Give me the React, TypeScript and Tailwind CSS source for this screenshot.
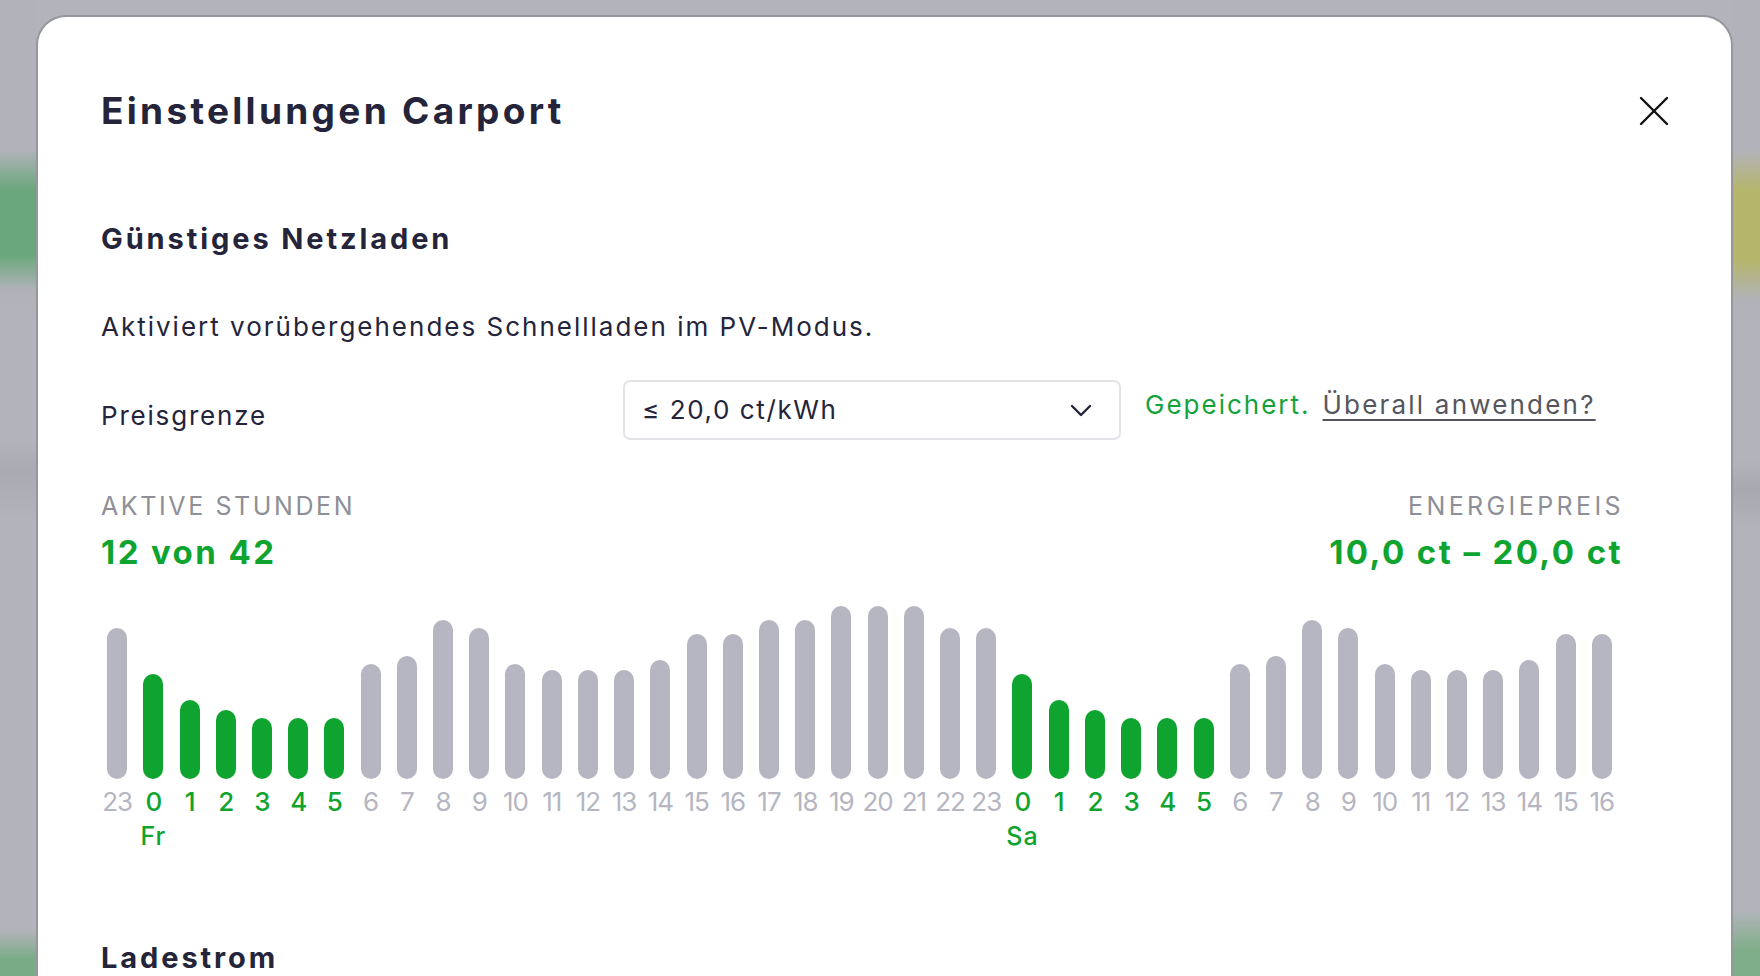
import React from 'react';

// hour, relative bar height (px), cheap hour?
const hours: { h: number; v: number; day?: string }[] = [
  { h: 23, v: 151 },
  ...[105, 79, 69, 61, 61, 61, 115, 123, 159, 151, 115, 109, 109, 109, 119, 145, 145, 159, 159, 173, 173, 173, 151, 151].map(
    (v, h) => ({ h, v, day: h === 0 ? 'Fr' : undefined })
  ),
  ...[105, 79, 69, 61, 61, 61, 115, 123, 159, 151, 115, 109, 109, 109, 119, 145, 145].map((v, h) => ({
    h,
    v,
    day: h === 0 ? 'Sa' : undefined,
  })),
];

const isActive = (h: number) => h >= 0 && h <= 5;

const CloseIcon = () => (
  <svg width="30" height="30" viewBox="0 0 30 30" fill="none" stroke="#111" strokeWidth="2.4" strokeLinecap="round">
    <line x1="2" y1="2" x2="28" y2="28" />
    <line x1="28" y1="2" x2="2" y2="28" />
  </svg>
);

const Chevron = () => (
  <svg width="22" height="13" viewBox="0 0 22 13" fill="none" stroke="#24243a" strokeWidth="2.4" strokeLinecap="round" strokeLinejoin="round">
    <polyline points="2,2 11,11 20,2" />
  </svg>
);

const PriceChart = () => (
  <div className="-ml-[2px] grid w-[1521px] grid-cols-[repeat(42,minmax(0,1fr))]">
    {hours.map((item, i) => {
      const active = isActive(item.h);
      return (
        <div key={i} className="flex flex-col items-center">
          <div className="flex h-[173px] items-end">
            <div
              className={active ? 'w-[20px] rounded-full bg-[#0fa42f]' : 'w-[20px] rounded-full bg-[#b5b6c1]'}
              style={{ height: item.v }}
            />
          </div>
          <span
            className={
              active
                ? 'mt-[10px] text-[26px] leading-none font-medium tracking-[-0.04em] text-[#0fa42f]'
                : 'mt-[10px] text-[26px] leading-none tracking-[-0.04em] text-[#b5b6c1]'
            }
          >
            {item.h}
          </span>
          <span className="mt-[9px] h-[24px] text-[25px] leading-none font-medium tracking-[1px] text-[#0fa42f]">{item.day}</span>
        </div>
      );
    })}
  </div>
);

export default function App() {
  return (
    <div className="flex h-[976px] w-full overflow-hidden bg-[#b3b4bb] font-['Inter',sans-serif]">
      <div className="h-full w-[36px] shrink-0 bg-[linear-gradient(to_bottom,#b2b3ba_0px,#b2b3ba_150px,#6aa77c_190px,#6aa77c_255px,#b0b2b8_290px,#b3b4bb_320px,#b3b4bb_440px,#a9aab2_470px,#b3b4bb_520px,#b3b4bb_930px,#79ab86_960px)]" />
      <div className="mt-[15px] h-[1200px] w-[1697px] shrink-0 rounded-t-[30px] border-2 border-b-0 border-[#96979d] bg-white pt-[75px] pl-[63px] pr-[63px]">
        <div className="flex items-start justify-between">
          <h1 className="text-[37px] leading-none font-bold tracking-[3.3px] text-[#24243a]">Einstellungen Carport</h1>
          <button className="mt-[4px] mr-[-1px]">
            <CloseIcon />
          </button>
        </div>

        <div className="w-[1520px]">
          <h2 className="mt-[95px] text-[29px] leading-none font-bold tracking-[2.9px] text-[#24243a]">Günstiges Netzladen</h2>
          <p className="mt-[61px] text-[26px] leading-none tracking-[2px] text-[#24243a]">
            Aktiviert vorübergehendes Schnellladen im PV-Modus.
          </p>

          <div className="mt-[40px] flex items-start">
            <span className="mt-[23px] w-[522px] text-[26px] leading-none tracking-[1.8px] text-[#24243a]">Preisgrenze</span>
            <div className="flex h-[60px] w-[498px] items-center justify-between rounded-[7px] border-2 border-[#e3e4e8] pr-[27px] pl-[17px]">
              <span className="text-[26px] leading-none tracking-[1.6px] text-[#24243a]">≤ 20,0 ct/kWh</span>
              <Chevron />
            </div>
            <span className="mt-[12px] ml-[24px] text-[26px] leading-none tracking-[2px] text-[#14a33a]">Gepeichert.</span>
            <a className="mt-[12px] ml-[12px] text-[26px] leading-none tracking-[2.2px] text-[#55565d] underline decoration-2 underline-offset-[5px]">
              Überall anwenden?
            </a>
          </div>

          <div className="mt-[54px] flex justify-between">
            <div className="flex flex-col">
              <span className="text-[25px] leading-none tracking-[2.6px] text-[#8e8f97] uppercase">Aktive Stunden</span>
              <span className="mt-[17px] text-[33px] leading-none font-bold tracking-[2.4px] text-[#0fa42f]">12 von 42</span>
            </div>
            <div className="flex flex-col items-end">
              <span className="-mr-[3px] text-[25px] leading-none tracking-[3.4px] text-[#8e8f97] uppercase">Energiepreis</span>
              <span className="-mr-[2px] mt-[17px] text-[33px] leading-none font-bold tracking-[2.4px] text-[#0fa42f]">
                10,0 ct – 20,0 ct
              </span>
            </div>
          </div>

          <div className="mt-[37px]">
            <PriceChart />
          </div>

          <h2 className="mt-[95px] text-[29px] leading-none font-bold tracking-[2.9px] text-[#24243a]">Ladestrom</h2>
        </div>
      </div>
      <div className="h-full w-[27px] shrink-0 bg-[linear-gradient(to_bottom,#b2b3ba_0px,#b2b3ba_150px,#b5b56c_190px,#b5b56c_260px,#b1b2b8_300px,#b3b4bb_330px,#b3b4bb_460px,#a8a9b0_490px,#b3b4bb_530px,#b3b4bb_910px,#7fae8a_950px)]" />
    </div>
  );
}
